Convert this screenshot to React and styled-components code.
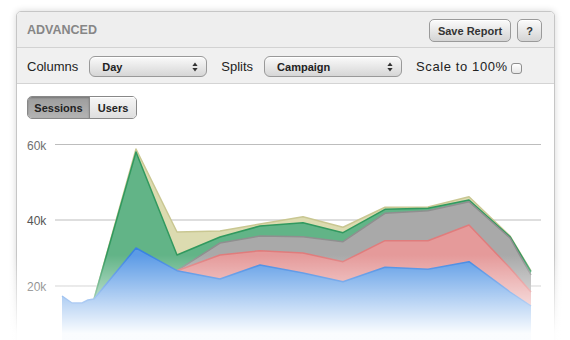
import React from 'react';
import styled, { createGlobalStyle } from 'styled-components';

const GlobalStyle = createGlobalStyle`
  html, body {
    margin: 0;
    padding: 0;
    background: #fff;
    font-family: "Liberation Sans", Arial, Helvetica, sans-serif;
  }
`;

// Styled components
const Page = styled.div`
  position: relative;
  width: 570px;
  height: 340px;
  overflow: hidden;
`;

const Panel = styled.div`
  margin: 11px 0 0 16px;
  width: 539px;
  height: 360px;
  box-sizing: border-box;
  border: 1px solid #c6c6c6;
  border-radius: 5px 5px 0 0;
  background: #fff;
  box-shadow: 0 0 7px rgba(0, 0, 0, 0.16);
  display: flex;
  flex-direction: column;
`;

const Header = styled.div`
  height: 35px;
  border-bottom: 1px solid #d2d2d2;
  background: #eeeeee;
  border-radius: 4px 4px 0 0;
  display: flex;
  align-items: center;
  justify-content: space-between;
  padding: 0 12px 0 10px;
`;

const Title = styled.div`
  font-size: 12.5px;
  font-weight: bold;
  color: #868686;
  padding-top: 1px;
`;

const ButtonGroup = styled.div`
  display: flex;
  gap: 6px;
  margin-top: 2px;
`;

const Button = styled.button`
  height: 23px;
  width: ${(p) => p.$width}px;
  padding: 0;
  border: 1px solid #9a9a9a;
  border-radius: 5px;
  background: linear-gradient(#fbfbfb, #d4d4d4);
  box-shadow: inset 0 1px 0 #fff;
  font-family: inherit;
  font-size: 11px;
  font-weight: bold;
  color: #333;
  cursor: pointer;
`;

const Toolbar = styled.div`
  height: 35px;
  border-bottom: 1px solid #d4d4d4;
  background: #f0f0f0;
  display: flex;
  align-items: center;
  padding: 0 10px;
  font-size: 13px;
  color: #222;
`;

const Label = styled.span`
  margin-right: ${(p) => p.$gap}px;
  margin-top: 2px;
  letter-spacing: ${(p) => (p.$wide ? '0.6px' : 'normal')};
`;

const Select = styled.div`
  width: ${(p) => p.$width}px;
  height: 21px;
  box-sizing: border-box;
  border: 1px solid #999;
  border-radius: 6px;
  background: linear-gradient(#fafafa, #d6d6d6);
  box-shadow: inset 0 1px 0 #fff;
  display: flex;
  align-items: center;
  justify-content: space-between;
  padding: 0 8px 0 12px;
  margin-right: 14px;
  margin-top: 2px;
  font-size: 11px;
  font-weight: bold;
  color: #222;
`;

const Checkbox = styled.span`
  width: 11px;
  height: 11px;
  box-sizing: border-box;
  border: 1px solid #8e8e8e;
  border-radius: 3px;
  background: linear-gradient(#fff, #e6e6e6);
  margin-left: 3px;
  margin-top: 6px;
`;

const Content = styled.div`
  padding: 12px 0 0 0;
`;

const Segmented = styled.div`
  margin-left: 10px;
  display: inline-flex;
  height: 23px;
  box-sizing: border-box;
  border: 1px solid #888;
  border-radius: 5px;
  overflow: hidden;
`;

const Segment = styled.div`
  display: flex;
  align-items: center;
  justify-content: center;
  width: ${(p) => p.$width}px;
  font-size: 11px;
  font-weight: bold;
  color: #222;
  background: ${(p) =>
    p.$active
      ? 'linear-gradient(#9c9c9c, #b4b4b4)'
      : 'linear-gradient(#f6f6f6, #dedede)'};
  box-shadow: ${(p) => (p.$active ? 'inset 0 1px 2px rgba(0,0,0,0.25)' : 'inset 0 1px 0 #fff')};
  & + & {
    border-left: 1px solid #888;
  }
`;

const Chart = styled.svg`
  display: block;
  margin-top: 1px;
`;

const Fade = styled.div`
  position: absolute;
  left: 0;
  top: 255px;
  width: 570px;
  height: 85px;
  background: linear-gradient(rgba(255, 255, 255, 0), rgba(255, 255, 255, 0.97) 92%);
  pointer-events: none;
`;

const Arrows = () => (
  <svg width="6" height="10" viewBox="0 0 6 10">
    <path d="M3 0.5 L5.6 4 L0.4 4 Z" fill="#333" />
    <path d="M3 9.5 L5.6 6 L0.4 6 Z" fill="#333" />
  </svg>
);

// stacked series tops, page coordinates
const xs = [94, 136, 177, 220, 260, 303, 343, 385, 428, 469, 510, 531];
const blue = [
  [62, 296], [72, 303], [82, 303], [88, 300], [94, 299], [136, 248], [177, 270.7],
  [220, 279], [260, 265], [303, 273], [343, 281.7], [385, 267.3], [428, 269.3],
  [469, 261.7], [510, 292], [531, 306],
];
const red = [[177, 270.7], [220, 255], [260, 250.7], [303, 253], [343, 261.7], [385, 240.7], [428, 240.7], [469, 225], [510, 268], [531, 292]];
const gray = [[177, 270.7], [220, 243], [260, 236], [303, 236.7], [343, 241.7], [385, 213.3], [428, 210.7], [469, 201.7], [510, 238], [531, 275]];
const green = [299, 152, 255, 237, 226, 222.7, 232.7, 209.3, 208.3, 200, 236.7, 271.7].map((y, i) => [xs[i], y]);
const yellow = [299, 149, 232, 231, 224, 216.7, 227.3, 207.3, 207, 196.7, 236, 271].map((y, i) => [xs[i], y]);

const BASE = 350;
const areaPath = (pts) =>
  `M${pts[0][0]} ${BASE} ` + pts.map((p) => `L${p[0]} ${p[1]}`).join(' ') + ` L${pts[pts.length - 1][0]} ${BASE} Z`;
const linePts = (pts) => pts.map((p) => p.join(',')).join(' ');

const series = [
  { pts: yellow, fill: '#dcdbb0', stroke: '#c9c792' },
  { pts: green, fill: '#62b487', stroke: '#31995f' },
  { pts: gray, fill: '#a9a9a9', stroke: '#8f8f8f' },
  { pts: red, fill: '#e59a9a', stroke: '#e07c7c' },
  { pts: blue, fill: '#5c9be6', stroke: '#3a83e2' },
];

const grid = [
  { label: '60k', y: 144.5, color: '#6f6f6f' },
  { label: '40k', y: 220, color: '#555' },
  { label: '20k', y: 286, color: '#555' },
];

export default function App() {
  return (
    <Page>
      <GlobalStyle />
      <Panel>
        <Header>
          <Title>ADVANCED</Title>
          <ButtonGroup>
            <Button $width={82}>Save Report</Button>
            <Button $width={25}>?</Button>
          </ButtonGroup>
        </Header>
        <Toolbar>
          <Label $gap={11}>Columns</Label>
          <Select $width={118}>
            Day <Arrows />
          </Select>
          <Label $gap={11}>Splits</Label>
          <Select $width={138}>
            Campaign <Arrows />
          </Select>
          <Label $gap={0} $wide>Scale to 100%</Label>
          <Checkbox />
        </Toolbar>
        <Content>
          <Segmented>
            <Segment $active $width={61}>Sessions</Segment>
            <Segment $width={46}>Users</Segment>
          </Segmented>
          <Chart width="537" height="230" viewBox="17 120 537 230">
            {grid.map((g) => (
              <g key={g.label}>
                <line x1="55" x2="541" y1={g.y} y2={g.y} stroke="#bdbdbd" strokeWidth="1" />
                <text
                  x="27"
                  y={g.y + 2}
                  dominantBaseline="middle"
                  fontSize="12"
                  fontFamily="Liberation Sans, Arial, sans-serif"
                  fill={g.color}
                >
                  {g.label}
                </text>
              </g>
            ))}
            {series.map((s, i) => (
              <g key={i}>
                <path d={areaPath(s.pts)} fill={s.fill} />
                <polyline points={linePts(s.pts)} fill="none" stroke={s.stroke} strokeWidth="1.5" strokeLinejoin="round" />
              </g>
            ))}
          </Chart>
        </Content>
      </Panel>
      <Fade />
    </Page>
  );
}
